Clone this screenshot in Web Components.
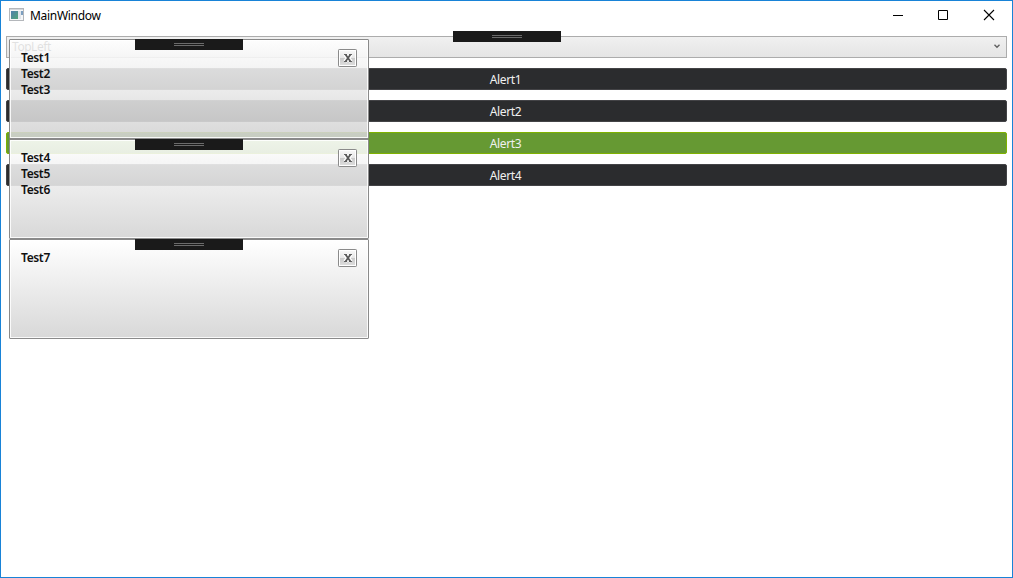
<!DOCTYPE html>
<html lang="en"><head><meta charset="utf-8"><title>MainWindow</title>
<style>html,body{margin:0;height:100%;overflow:hidden;background:#fff;font:12px/16px "Noto Sans","Open Sans",sans-serif}</style></head>
<body>
<main-window caption="MainWindow">
<combo-box value="TopLeft"></combo-box>
<alert-button>Alert1</alert-button>
<alert-button>Alert2</alert-button>
<alert-button active>Alert3</alert-button>
<alert-button>Alert4</alert-button>
<alert-panel slot="alerts"><div>Test1</div><div>Test2</div><div>Test3</div></alert-panel>
<alert-panel slot="alerts"><div>Test4</div><div>Test5</div><div>Test6</div></alert-panel>
<alert-panel slot="alerts"><div>Test7</div></alert-panel>
</main-window>
<script>
const define=(name,html,setup)=>customElements.define(name,class extends HTMLElement{
  constructor(){super();this.attachShadow({mode:'open'}).innerHTML=html;}
  connectedCallback(){if(setup)setup(this,this.shadowRoot);}
});
define('grip-handle',`<style>
:host{display:flex;flex-direction:column;align-items:center;box-sizing:border-box;width:108px;height:11px;padding-top:4px;gap:1px;background:#1a1a1a}
i{width:30px;height:1px;background:#6b6b6b}</style><i></i><i></i>`);
define('title-bar',`<style>
:host{display:flex;height:30px;align-items:stretch;color:#000}
.icon{margin:7px 5px 0 8px;width:16px;height:14px}
.name{flex:1;padding-top:7px;letter-spacing:-.3px}
.btn{width:46px;height:30px;display:block}
.min{width:44px}
.close{width:45px}</style>
<svg class="icon" viewBox="0 0 16 14" shape-rendering="crispEdges"><rect x=".5" y=".5" width="14" height="12" fill="#f6f7f8" stroke="#b4b7bb"/><rect x="1" y="1" width="13" height="1" fill="#d5d8dc"/><rect x="2" y="3" width="7" height="8" fill="url(#g)"/><rect x="9" y="3" width="3" height="8" fill="#e0e5eb"/><rect x="12" y="3" width="2" height="4" fill="#7c9fc0"/><defs><linearGradient id="g" x2="1" y2="1"><stop stop-color="#4f7fae"/><stop offset="1" stop-color="#4fa578"/></linearGradient></defs></svg>
<span class="name"></span>
<svg class="btn min" viewBox="0 0 44 30"><path d="M16 14.5h10" stroke="#000"/></svg>
<svg class="btn" viewBox="0 0 46 30"><path d="M17.500 9.500h9v9h-9z" fill="none" stroke="#000"/></svg>
<svg class="btn close" viewBox="0 0 45 30"><path d="M17 9l10 10M27 9l-10 10" fill="none" stroke="#000" stroke-width="1.1"/></svg>`,
(h,r)=>r.querySelector('.name').textContent=h.getAttribute('caption'));
define('main-window',`<style>
:host{display:block;position:relative;box-sizing:border-box;width:1013px;height:578px;border:1px solid #1883d7;background:#fff}
.content{display:flex;flex-direction:column;gap:10px;padding:5px}
.grip{position:absolute;left:452px;top:30px}
.alerts{position:absolute;left:8px;top:38px;display:flex;flex-direction:column}</style>
<title-bar></title-bar><div class="content"><slot></slot></div>
<grip-handle class="grip"></grip-handle><div class="alerts"><slot name="alerts"></slot></div>`,
(h,r)=>{const t=document.createElement('title-bar');t.setAttribute('caption',h.getAttribute('caption'));r.querySelector('title-bar').replaceWith(t);});
define('combo-box',`<style>
:host{display:flex;justify-content:space-between;box-sizing:border-box;height:22px;border:1px solid #acacac;background:linear-gradient(#f0f0f0,#e5e5e5);padding:2px 5px;color:#000;letter-spacing:-.45px}
svg{width:8px;height:16px}</style><span></span><svg viewBox="0 0 8 16"><path d="M1.500 5.800l2.500 2.400 2.500-2.400" fill="none" stroke="#606060" stroke-width="1.4"/></svg>`,
(h,r)=>r.querySelector('span').textContent=h.getAttribute('value'));
define('alert-button',`<style>
:host{display:flex;justify-content:center;box-sizing:border-box;height:22px;padding:3px 2px 0 0;border:1px solid #434346;border-radius:2px;background:#2b2c2e;color:#f0f0f0;letter-spacing:-.35px}
:host([active]){background:#669933;border-color:#7fb200}</style><slot></slot>`);
define('close-button',`<style>
:host{display:block;width:19px;height:18px}svg{display:block}</style>
<svg width="19" height="18" viewBox="0 0 19 18"><defs><linearGradient id="b" x2="0" y2="1"><stop stop-color="#f7f7f7"/><stop offset=".5" stop-color="#e6e6e6"/><stop offset=".5" stop-color="#c8c8c8"/><stop offset="1" stop-color="#ddd"/></linearGradient></defs>
<rect x=".5" y=".5" width="18" height="17" rx=".7" fill="#fff" stroke="#8a8a8a"/><rect x="2" y="2" width="15" height="14" fill="url(#b)"/>
<path d="M7 5.500l6 7M13 5.500l-6 7" stroke="#fff" stroke-width="4"/><path d="M6 5.500h3M11 5.500h3M6 12.500h3M11 12.500h3" stroke="#666"/><path d="M7.500 5.500l5 7M12.500 5.500l-5 7" stroke="#585858" stroke-width="1.8"/></svg>`);
define('alert-panel',`<style>
:host{display:flex;justify-content:space-between;align-items:flex-start;position:relative;box-sizing:border-box;width:360px;height:100px;padding:9px 11px;border:1px solid #8a8a8a;border-radius:1px;color:#101010;background:linear-gradient(rgba(255,255,255,.885),rgba(211,211,211,.885));box-shadow:inset 0 0 0 1px rgba(255,255,255,.85);font-weight:600;letter-spacing:-.35px}
grip-handle{position:absolute;left:125px;top:-1px}
.text{padding-top:1px}</style><div class="text"><slot></slot></div><close-button></close-button><grip-handle></grip-handle>`);
</script></body></html>
